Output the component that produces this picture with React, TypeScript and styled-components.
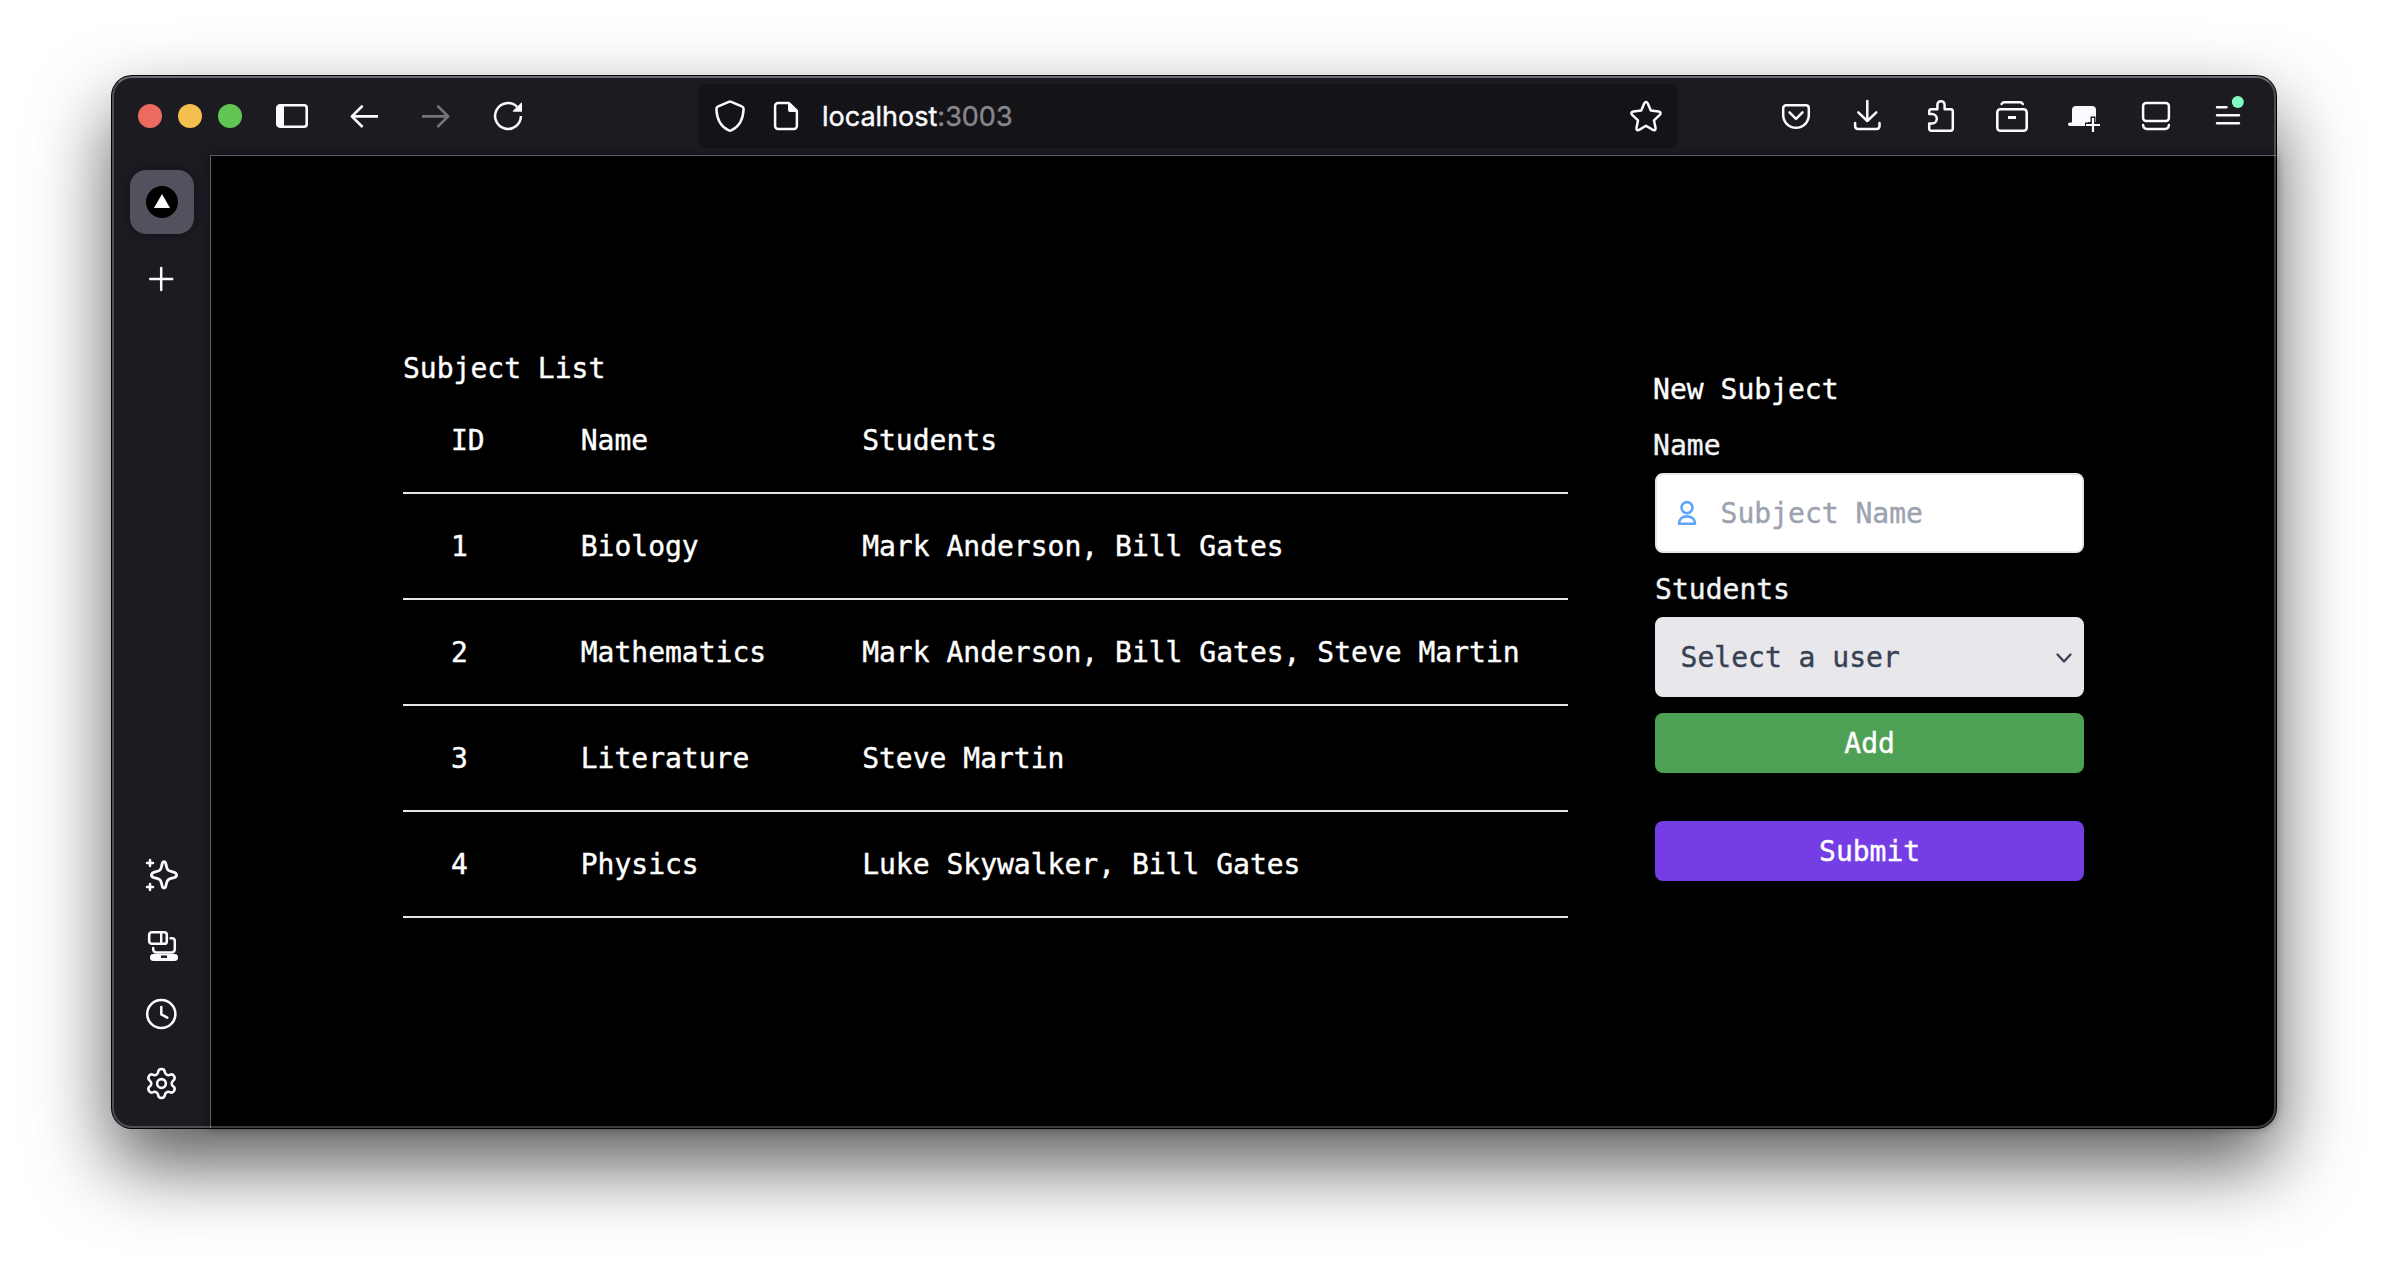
import React from "react";
import styled, { createGlobalStyle } from "styled-components";
import { Settings } from "lucide-react";

const mono = `"DejaVu Sans Mono", "Liberation Mono", monospace`;

const GlobalStyle = createGlobalStyle`
  * { box-sizing: border-box; }
  body { margin: 0; background: #fff; overflow: hidden; }
`;

const Desktop = styled.div`
  width: 2388px;
  height: 1276px;
  padding: 76px 112px 148px;
  background: #fff;
`;

const Window = styled.div`
  position: relative;
  display: flex;
  flex-direction: column;
  height: 1052px;
  border-radius: 20px;
  background: #1c1b22;
  box-shadow: 0 0 0 1px #000, 0 36px 78px rgba(0, 0, 0, 0.66);

  &::after {
    content: "";
    position: absolute;
    inset: 0;
    border-radius: 20px;
    border: 2px solid rgba(255, 255, 255, 0.23);
    border-top-color: rgba(255, 255, 255, 0.36);
    pointer-events: none;
    z-index: 3;
  }
`;

const Toolbar = styled.header`
  display: flex;
  align-items: center;
  height: 79px;
  padding: 8px 32px 7px 26px;
`;

const Lights = styled.div`
  display: flex;
  gap: 16px;
  margin-right: 34px;
`;

const Light = styled.span<{ $color: string }>`
  width: 24px;
  height: 24px;
  border-radius: 50%;
  background: ${(p) => p.$color};
`;

const IconGroup = styled.div`
  display: flex;
  gap: 40px;
`;

const AddressBar = styled.div`
  flex: 1;
  display: flex;
  align-items: center;
  height: 64px;
  margin: 0 102px 0 174px;
  padding: 0 16px;
  border-radius: 8px;
  background: #141318;
`;

const Url = styled.div`
  flex: 1;
  margin-left: 20px;
  padding-top: 2px;
  color: #fbfbfe;
  font: 400 27px/40px Inter, "Liberation Sans", sans-serif;
  -webkit-text-stroke: 0.4px;
`;

const Port = styled.span`
  color: #87868d;
`;

const Body = styled.div`
  flex: 1;
  display: flex;
  min-height: 0;
`;

const Sidebar = styled.aside`
  display: flex;
  flex-direction: column;
  align-items: center;
  width: 98px;
  padding: 15px 0 28px 2px;
`;

const Tab = styled.div`
  display: flex;
  align-items: center;
  justify-content: center;
  width: 64px;
  height: 64px;
  margin-bottom: 29px;
  border-radius: 16px;
  background: #52525e;
  box-shadow: 0 0 8px rgba(0, 0, 0, 0.4);
`;

const Tools = styled.div`
  display: flex;
  flex-direction: column;
  gap: 38px;
  margin-top: auto;
`;

const Glyph = styled.svg<{ $dim?: boolean; $gap?: number }>`
  display: block;
  flex: none;
  width: 32px;
  height: 32px;
  overflow: visible;
  margin-right: ${(p) => p.$gap ?? 0}px;
  opacity: ${(p) => (p.$dim ? 0.4 : 1)};
  fill: none;
  stroke: #fbfbfe;
  stroke-width: 2.5;
  stroke-linecap: round;
  stroke-linejoin: round;

  .solid { fill: #fbfbfe; stroke: none; }
`;

const GearSlot = styled.div`
  display: flex;
  align-items: center;
  justify-content: center;
  width: 32px;
  height: 32px;
  color: #fbfbfe;

  svg { flex: none; margin: -1px 1px 0 0; }
`;

const Page = styled.main`
  position: relative;
  flex: 1;
  display: flex;
  align-items: flex-start;
  padding: 192px 0 0 192px;
  border-left: 1px solid #5c5b61;
  border-top: 1px solid #5c5b61;
  border-bottom-right-radius: 20px;
  background: #000;
  box-shadow: 0 0 10px rgba(0, 0, 0, 0.4);
  color: #fff;
  font: 400 28px/42px ${mono};
  -webkit-text-stroke: 0.4px;
`;

const Heading = styled.h2`
  height: 40px;
  margin: 0;
  font: inherit;
`;

const Table = styled.table`
  border-collapse: separate;
  border-spacing: 0;
`;

const Cell = styled.td`
  height: 106px;
  padding: 32px 48px 30px;
  border-bottom: 2px solid #e5e7eb;
  font-weight: 400;
  text-align: left;
  white-space: nowrap;
`;

const Form = styled.form`
  display: flex;
  flex-direction: column;
  width: 429px;
  margin: 21px 0 0 87.5px;
`;

const FormHeading = styled(Heading)`
  margin: 0 0 16px -2px;
`;

const Label = styled.label<{ $shift?: number }>`
  height: 40px;
  margin: 0 0 8px ${(p) => p.$shift ?? 0}px;
  color: #f3f4f6;
`;

const Field = styled.div`
  display: flex;
  align-items: center;
  height: 80px;
  margin-bottom: 16px;
  padding: 0 20px;
  border: 2px solid #e5e7eb;
  border-radius: 8px;
  background: #fff;
`;

const UserIcon = styled.svg`
  flex: none;
  width: 20px;
  height: 26px;
  margin-right: 23.5px;
  fill: none;
  stroke: #60a5fa;
  stroke-width: 2.6;
  stroke-linejoin: round;
`;

const TextInput = styled.input`
  flex: 1;
  min-width: 0;
  padding: 2px 0 0;
  border: 0;
  outline: 0;
  background: transparent;
  font: inherit;
  -webkit-text-stroke: inherit;

  &::placeholder { color: #9ca3af; opacity: 1; }
`;

const Picker = styled(Field)`
  justify-content: space-between;
  padding: 0 9px 0 23.5px;
  border-color: #e8e7ec;
  background: #e8e7ec;
  color: #374151;
`;

const PickerText = styled.span`
  padding-top: 2px;
`;

const Chevron = styled.svg`
  width: 18px;
  height: 12px;
  margin-top: 1px;
  fill: none;
  stroke: #374151;
  stroke-width: 2.3;
  stroke-linecap: round;
  stroke-linejoin: round;
`;

const Button = styled.button<{ $color: string }>`
  height: 60px;
  margin: 0 0 48px;
  padding: 2px 0 0;
  border: 0;
  border-radius: 8px;
  background: ${(p) => p.$color};
  color: #fff;
  font: inherit;
  -webkit-text-stroke: 0.4px;
`;

const subjects = [
  { id: 1, name: "Biology", students: "Mark Anderson, Bill Gates" },
  { id: 2, name: "Mathematics", students: "Mark Anderson, Bill Gates, Steve Martin" },
  { id: 3, name: "Literature", students: "Steve Martin" },
  { id: 4, name: "Physics", students: "Luke Skywalker, Bill Gates" },
];

type IconProps = { children: React.ReactNode; dim?: boolean; gap?: number };

const Icon = ({ children, dim, gap }: IconProps) => (
  <Glyph viewBox="0 0 32 32" $dim={dim} $gap={gap}>
    {children}
  </Glyph>
);

const NavIcons = () => (
  <IconGroup>
    <Icon>
      <rect x="1.3" y="5.3" width="29.4" height="21.4" rx="2.6" strokeWidth="2.6" />
      <path className="solid" d="M2 5H8V27H2Z" />
    </Icon>
    <Icon>
      <path d="M14.6 5.8L3.8 16.4L14.6 27M4 16.4H30" strokeWidth="2.6" strokeLinecap="butt" />
    </Icon>
    <Icon dim>
      <path d="M17.4 5.8L28.2 16.4L17.4 27M28 16.4H2" strokeWidth="2.6" strokeLinecap="butt" />
    </Icon>
    <Icon>
      <path d="M28.9 16A12.9 12.9 0 1 1 25 6.8" strokeLinecap="butt" />
      <path className="solid" d="M30 2.5V11.7H21.4Q20 11.7 21 10.7L29.2 2.7Z" />
    </Icon>
  </IconGroup>
);

const ActionIcons = () => (
  <IconGroup>
    <Icon>
      <path d="M6 5.2H26A2.8 2.8 0 0 1 28.8 8V15A12.8 12.8 0 0 1 3.2 15V8A2.8 2.8 0 0 1 6 5.2ZM9.5 12.4L16 18.9L22.5 12.4" />
    </Icon>
    <Icon>
      <path d="M15.3 1V21M6.3 12.3L15.3 21L24.3 12.3M3.1 23V26Q3.1 28.9 6 28.9H24.6Q27.5 28.9 27.5 26V23" />
    </Icon>
    <Icon>
      <path d="M5.2 13.9V11.5Q5.2 9.3 7.4 9.3H13.4V4.8A3.6 3.6 0 0 1 20.6 4.8V9.3H26.6Q28.8 9.3 28.8 11.5V28.5Q28.8 30.7 26.6 30.7H7.4Q5.2 30.7 5.2 28.5V23.5H8A4.8 4.8 0 0 0 8 13.9Z" />
    </Icon>
    <Icon>
      <rect x="1.3" y="9.3" width="29.4" height="21.4" rx="3" strokeWidth="2.6" />
      <path d="M5.6 4Q6.4 2.3 8.6 2.3H23.8Q26 2.3 26.8 4" strokeWidth="2.5" />
      <path className="solid" d="M12 16H20V19H12Z" />
    </Icon>
    <Icon>
      <path className="solid" d="M4 22.4V10A4 4 0 0 1 8 6H24A4 4 0 0 1 28 10V22H20V26H1.8A1.8 1.8 0 0 1 1.8 22.4Z" />
      <path d="M25 16.5V32M17 25H32" stroke="#1c1b22" strokeWidth="5" strokeLinecap="butt" />
      <path d="M25 18V32M18 25H32" strokeWidth="2.2" strokeLinecap="butt" />
    </Icon>
    <Icon>
      <rect x="3.1" y="3.1" width="25.8" height="17.8" rx="3" />
      <path d="M3.1 25Q3.3 28.9 7 28.9H25Q28.7 28.9 28.9 25" />
    </Icon>
    <Icon>
      <path d="M5 7.3H14.5M5 15.3H27M5 23.3H27" />
      <circle cx="25.8" cy="2" r="6" fill="#80ffc0" stroke="none" />
    </Icon>
  </IconGroup>
);

const SidebarTools = () => (
  <Tools>
    <Icon>
      <path d="M18 3.6C19.4 3.6 19.7 5 20.4 8.2C21.2 12 22 12.8 25.8 13.6C29 14.3 30.6 14.8 30.6 17C30.6 19.2 29 19.4 25.8 20.2C22 21.2 21.2 22 20.4 25.8C19.7 29 19.4 30.2 18 30.2C16.6 30.2 16.3 29 15.6 25.8C14.8 22 14 21.2 10.2 20.2C7 19.4 5.4 19.2 5.4 17C5.4 14.8 7 14.3 10.2 13.6C14 12.8 14.8 12 15.6 8.2C16.3 5 16.6 3.6 18 3.6Z" strokeWidth="2.8" />
      <path d="M4 2V8M1 5H7M4 26V32M1 29H7" />
    </Icon>
    <Icon>
      <rect x="3.2" y="4.2" width="17.6" height="11.6" rx="2.6" strokeWidth="2.6" />
      <path d="M15.2 5V15" strokeWidth="2.4" />
      <path d="M24.6 10.3H26Q28.8 10.3 28.8 13V21Q28.8 23.6 26.4 24.4H9.6Q7.2 23.6 7.2 21V20" />
      <rect className="solid" x="4" y="26" width="28" height="7" rx="3.4" />
      <path d="M15 28.7H21" stroke="#1c1b22" strokeLinecap="butt" />
    </Icon>
    <Icon>
      <circle cx="15.3" cy="16" r="14.1" />
      <path d="M15.3 9V16.4L21.3 19.6" />
    </Icon>
    <GearSlot>
      <Settings size={35} strokeWidth={1.75} />
    </GearSlot>
  </Tools>
);

export default function App() {
  return (
    <Desktop>
      <GlobalStyle />
      <Window>
        <Toolbar>
          <Lights>
            <Light $color="#ed6a5e" />
            <Light $color="#f5bf4f" />
            <Light $color="#61c554" />
          </Lights>
          <NavIcons />
          <AddressBar>
            <Icon gap={24}>
              <path d="M14.8 1.8Q16 1.2 17.2 1.8L27.8 6.3Q29.6 7.1 29.6 9C29.2 19.5 24.6 27 17.2 30.4Q16 31 14.8 30.4C7.4 27 2.8 19.5 2.4 9Q2.4 7.1 4.2 6.3Z" />
            </Icon>
            <Icon>
              <path d="M8 3.1H19L26.9 11V26A2.9 2.9 0 0 1 24 28.9H8A2.9 2.9 0 0 1 5.1 26V6A2.9 2.9 0 0 1 8 3.1Z" />
              <path className="solid" d="M18 2.6H19.5L27.6 10.6V12H20A2 2 0 0 1 18 10Z" />
            </Icon>
            <Url>
              localhost<Port>:3003</Port>
            </Url>
            <Icon>
              <path d="M14.2 3.4Q16 0.8 17.8 3.4L20.8 10.4L28.6 11.5Q32 12.4 29.8 14.9L24 20.4L25.5 27.8Q25.8 31.2 22.9 29.9L16 25.8L9.1 29.9Q6.2 31.2 6.5 27.8L8 20.4L2.2 14.9Q0 12.4 3.4 11.5L11.2 10.4Z" />
            </Icon>
          </AddressBar>
          <ActionIcons />
        </Toolbar>
        <Body>
          <Sidebar>
            <Tab>
              <Icon>
                <circle cx="16" cy="16" r="16" fill="#000" stroke="none" />
                <path className="solid" d="M16 8L24 22H8Z" />
              </Icon>
            </Tab>
            <Icon>
              <path d="M15.2 5V27M4.2 16H26.2" />
            </Icon>
            <SidebarTools />
          </Sidebar>
          <Page>
            <section>
              <Heading>Subject List</Heading>
              <Table>
                <thead>
                  <tr>
                    <Cell as="th">ID</Cell>
                    <Cell as="th">Name</Cell>
                    <Cell as="th">Students</Cell>
                  </tr>
                </thead>
                <tbody>
                  {subjects.map((s) => (
                    <tr key={s.id}>
                      <Cell>{s.id}</Cell>
                      <Cell>{s.name}</Cell>
                      <Cell>{s.students}</Cell>
                    </tr>
                  ))}
                </tbody>
              </Table>
            </section>
            <Form>
              <FormHeading>New Subject</FormHeading>
              <Label $shift={-2}>Name</Label>
              <Field>
                <UserIcon viewBox="0 0 20 26">
                  <circle cx="10" cy="7.6" r="5.5" />
                  <path d="M2 23.8C2 19 5.4 16.4 10 16.4S18 19 18 23.8Z" />
                </UserIcon>
                <TextInput placeholder="Subject Name" />
              </Field>
              <Label>Students</Label>
              <Picker>
                <PickerText>Select a user</PickerText>
                <Chevron viewBox="0 0 18 12">
                  <path d="M2.5 2.5L9 9.5L15.5 2.5" />
                </Chevron>
              </Picker>
              <Button type="button" $color="#4ea154">Add</Button>
              <Button type="button" $color="#743ee4">Submit</Button>
            </Form>
          </Page>
        </Body>
      </Window>
    </Desktop>
  );
}
